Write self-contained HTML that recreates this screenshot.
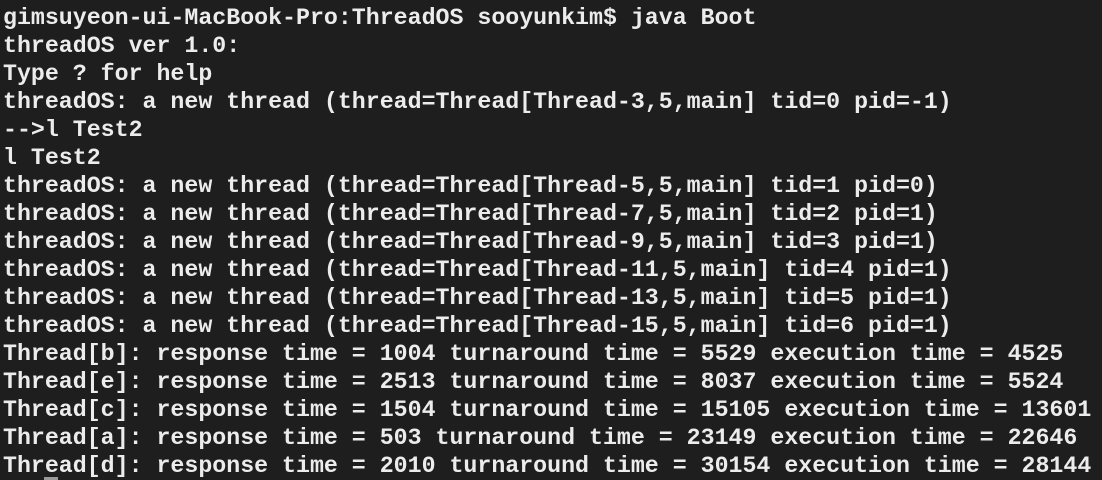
<!DOCTYPE html>
<html><head><style>
html,body{margin:0;padding:0;background:#1e1e1e;width:1102px;height:480px;overflow:hidden}
pre{margin:0;position:absolute;left:3px;top:4px;font-family:"Liberation Mono",monospace;font-size:23.25px;line-height:28px;color:#ececec;font-weight:bold;letter-spacing:0}
.cur{position:absolute;left:44px;top:477px;width:14px;height:3px;background:#9a9a9a}
</style></head><body>
<pre>gimsuyeon-ui-MacBook-Pro:ThreadOS sooyunkim$ java Boot
threadOS ver 1.0:
Type ? for help
threadOS: a new thread (thread=Thread[Thread-3,5,main] tid=0 pid=-1)
-->l Test2
l Test2
threadOS: a new thread (thread=Thread[Thread-5,5,main] tid=1 pid=0)
threadOS: a new thread (thread=Thread[Thread-7,5,main] tid=2 pid=1)
threadOS: a new thread (thread=Thread[Thread-9,5,main] tid=3 pid=1)
threadOS: a new thread (thread=Thread[Thread-11,5,main] tid=4 pid=1)
threadOS: a new thread (thread=Thread[Thread-13,5,main] tid=5 pid=1)
threadOS: a new thread (thread=Thread[Thread-15,5,main] tid=6 pid=1)
Thread[b]: response time = 1004 turnaround time = 5529 execution time = 4525
Thread[e]: response time = 2513 turnaround time = 8037 execution time = 5524
Thread[c]: response time = 1504 turnaround time = 15105 execution time = 13601
Thread[a]: response time = 503 turnaround time = 23149 execution time = 22646
Thread[d]: response time = 2010 turnaround time = 30154 execution time = 28144</pre>
<div class="cur"></div>
</body></html>
